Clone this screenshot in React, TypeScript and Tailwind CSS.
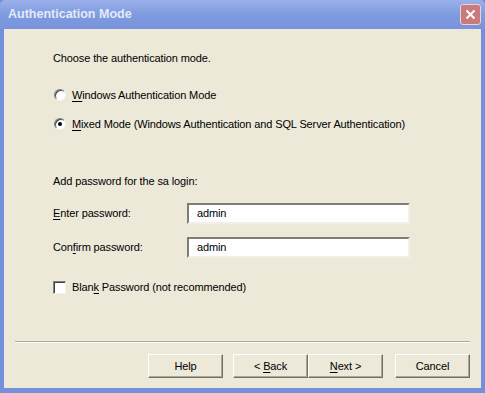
import React from 'react'

const font = { fontFamily: '"Liberation Sans", Arial, sans-serif' }

function U({ children }: { children: React.ReactNode }) {
  return <span className="underline underline-offset-[2px] decoration-[1px]">{children}</span>
}

function Radio({ checked }: { checked?: boolean }) {
  return (
    <span className="relative w-[12px] h-[12px] rounded-full border border-t-[#808080] border-l-[#808080] border-r-[#f4f2ea] border-b-[#f4f2ea] bg-white flex items-center justify-center shadow-[inset_1px_1px_0_#404040]">
      {checked && <span className="w-[4px] h-[4px] rounded-full bg-black" />}
    </span>
  )
}

function Field({ label, value }: { label: React.ReactNode; value: string }) {
  return (
    <div className="flex items-center h-[21px]">
      <div className="w-[134px]">{label}</div>
      <div className="w-[223px] h-[21px] bg-[#fefefe] border-2 border-t-[#7f7d74] border-l-[#7f7d74] border-r-[#f2f0e6] border-b-[#f2f0e6] flex items-center pl-[8px]">
        {value}
      </div>
    </div>
  )
}

function Btn({ children, className = '' }: { children: React.ReactNode; className?: string }) {
  return (
    <button className={`w-[75px] h-[24px] bg-[#ece9d8] border border-t-white border-l-white border-r-[#716f64] border-b-[#716f64] shadow-[inset_-1px_-1px_0_#aca899] text-[11px] text-black ${className}`}>
      {children}
    </button>
  )
}

export default function App() {
  return (
    <div className="w-[485px] h-[393px] flex flex-col bg-[#7590da] text-[11px] tracking-[-0.12px] text-black" style={font}>
      {/* title bar */}
      <div className="h-[29px] flex items-center justify-between px-[8px] bg-gradient-to-b from-[#9ab0ea] via-[#7f9be0] to-[#7893dc] rounded-t-[5px]">
        <span className="text-[12.5px] font-bold text-[#e4eaf8] tracking-[0px]">Authentication Mode</span>
        <div className="w-[21px] h-[21px] mr-[-4px] rounded-[3px] border border-[#e8d4d4] bg-[#c97a7a] flex items-center justify-center">
          <svg width="11" height="11" viewBox="0 0 11 11">
            <path d="M1.5 1.5 L9.5 9.5 M9.5 1.5 L1.5 9.5" stroke="#fff" strokeWidth="2" />
          </svg>
        </div>
      </div>

      {/* body */}
      <div className="flex-1 flex flex-col bg-[#ece9d8] mx-[4px] mb-[5px]">
        <div className="flex flex-col pl-[49px]">
          <div className="h-[14px] mt-[22px] flex items-center">Choose the authentication mode.</div>

          <div className="h-[14px] mt-[23px] flex items-center gap-[6px] pl-[1px]">
            <Radio />
            <span><U>W</U>indows Authentication Mode</span>
          </div>
          <div className="h-[14px] mt-[15px] flex items-center gap-[6px] pl-[1px]">
            <Radio checked />
            <span><U>M</U>ixed Mode (Windows Authentication and SQL Server Authentication)</span>
          </div>

          <div className="h-[14px] mt-[43px] flex items-center">Add password for the sa login:</div>

          <div className="mt-[15px]">
            <Field label={<span><U>E</U>nter password:</span>} value="admin" />
          </div>
          <div className="mt-[13px]">
            <Field label={<span>Con<U>f</U>irm password:</span>} value="admin" />
          </div>

          <div className="h-[14px] mt-[22px] flex items-center gap-[6px]">
            <span className="w-[13px] h-[13px] bg-white border border-t-[#808080] border-l-[#808080] border-r-[#f4f2ea] border-b-[#f4f2ea] shadow-[inset_1px_1px_0_#404040]" />
            <span>Blan<U>k</U> Password (not recommended)</span>
          </div>
        </div>

        <div className="flex-1" />

        <div className="mx-[11px] h-[2px] border-t border-t-[#aca899] border-b border-b-white" />

        <div className="flex justify-end items-center pr-[11px] pt-[11px] pb-[10px]">
          <Btn className="mr-[10px]">Help</Btn>
          <Btn>&lt; <U>B</U>ack</Btn>
          <Btn className="mr-[12px]"><U>N</U>ext &gt;</Btn>
          <Btn>Cancel</Btn>
        </div>
      </div>
    </div>
  )
}
